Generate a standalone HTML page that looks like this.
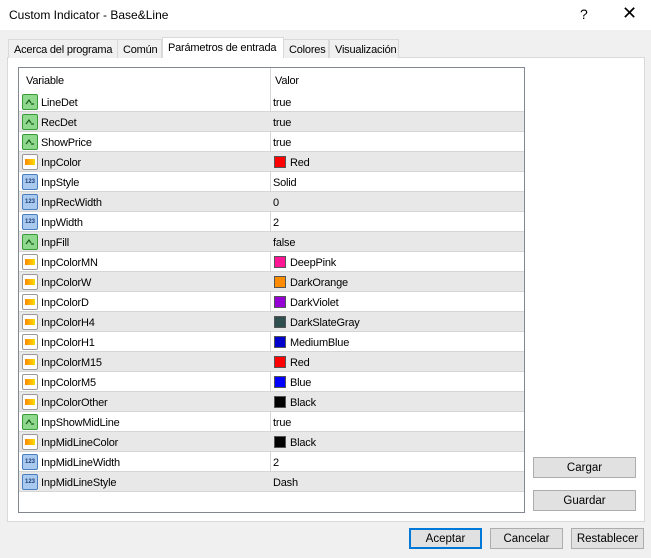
<!DOCTYPE html>
<html><head><style>
*{margin:0;padding:0;box-sizing:border-box}
body{width:651px;height:558px;background:#f0f0f0;font-family:"Liberation Sans",sans-serif;font-size:11px;color:#000;position:relative;overflow:hidden}
.a{position:absolute}
.title{left:0;top:0;width:651px;height:30px;background:#fff}
.tab{top:39px;height:19px;border:1px solid #d9d9d9;border-bottom:none;background:#f0f0f0;padding:4px 0 0 5px;font-size:11px;letter-spacing:-0.2px;white-space:nowrap;overflow:hidden}
.panel{left:7px;top:57px;width:638px;height:465px;background:#fff;border:1px solid #d9d9d9}
.grid{left:18px;top:67px;width:507px;height:446px;border:1px solid #828790;background:#fff}
.row{position:absolute;left:0;width:505px;height:20px;border-bottom:1px solid #d6d6d6}
.row.g{background:#e8e8e8}
.row span{position:absolute;top:5px;letter-spacing:-0.2px;white-space:nowrap}
.vl{position:absolute;left:251px;top:0;width:1px;height:424px;background:#d6d6d6}
.ic{position:absolute;left:3px;top:2px;width:16px;height:16px;border-radius:2px}
.grn{background:#8fd98f;border:1px solid #3a9a3a}
.blu{background:#a9c9ee;border:1px solid #4a7fbf;font-size:6px;font-weight:bold;color:#1c3f78;text-align:center;line-height:14px}
.org{background:#fff;border:1px solid #999}
.sw{position:absolute;left:255px;top:4px;width:12px;height:12px;border:1px solid #555}
.btn{height:21px;border:1px solid #adadad;background:#e1e1e1;text-align:center;line-height:20px;font-size:11.5px}
</style></head><body>
<div class="a title"></div>
<div class="a" style="left:9px;top:8px;font-size:12px">Custom Indicator - Base&amp;Line</div>
<div class="a" style="left:580px;top:6px;font-size:14px">?</div>
<div class="a" style="left:622px;top:3px;font-size:18px;font-weight:300">✕</div>
<div class="a panel"></div>
<div class="a tab" style="left:8px;width:110px">Acerca del programa</div>
<div class="a tab" style="left:117px;width:45px">Común</div>
<div class="a tab" style="left:162px;top:37px;height:21px;width:122px;background:#fff;padding-top:4px">Parámetros de entrada</div>
<div class="a tab" style="left:283px;width:46px">Colores</div>
<div class="a tab" style="left:329px;width:70px">Visualización</div>
<div class="a grid">
<div class="row" style="top:0;height:25px;border:none"><span style="left:7px;top:7px">Variable</span><span style="left:256px;top:7px">Valor</span></div>
<div class="vl"></div>
<div id="rows"></div>
</div>
<div class="a btn" style="left:533px;top:457px;width:103px">Cargar</div>
<div class="a btn" style="left:533px;top:490px;width:103px">Guardar</div>
<div class="a btn" style="left:409px;top:528px;width:73px;border:2px solid #0078d7;line-height:18px">Aceptar</div>
<div class="a btn" style="left:490px;top:528px;width:73px">Cancelar</div>
<div class="a btn" style="left:571px;top:528px;width:73px">Restablecer</div>
<script>
var d=[["g","LineDet","true"],["g","RecDet","true"],["g","ShowPrice","true"],["o","InpColor","Red","#f00"],["b","InpStyle","Solid"],["b","InpRecWidth","0"],["b","InpWidth","2"],["g","InpFill","false"],["o","InpColorMN","DeepPink","#ff1493"],["o","InpColorW","DarkOrange","#ff8c00"],["o","InpColorD","DarkViolet","#9400d3"],["o","InpColorH4","DarkSlateGray","#2f4f4f"],["o","InpColorH1","MediumBlue","#0000cd"],["o","InpColorM15","Red","#f00"],["o","InpColorM5","Blue","#00f"],["o","InpColorOther","Black","#000"],["g","InpShowMidLine","true"],["o","InpMidLineColor","Black","#000"],["b","InpMidLineWidth","2"],["b","InpMidLineStyle","Dash"]];
var h="";d.forEach(function(r,i){
var ic=r[0]=="g"?'<div class="ic grn"><svg width="14" height="14" viewBox="0 0 14 14"><path d="M3 9 L6 5 L8 8 M8 9 H11" stroke="#1a5a1a" fill="none" stroke-width="1.2"/></svg></div>':r[0]=="b"?'<div class="ic blu">123</div>':'<div class="ic org"><div style="margin:4px 2px;height:6px;background:linear-gradient(90deg,#f80,#fd0)"></div></div>';
var sw=r[3]?'<div class="sw" style="background:'+r[3]+'"></div>':'';
h+='<div class="row'+(i%2?' g':'')+'" style="top:'+(24+i*20)+'px">'+ic+'<span style="left:22px">'+r[1]+'</span>'+sw+'<span style="left:'+(r[3]?271:254)+'px">'+r[2]+'</span></div>';
});document.getElementById("rows").innerHTML=h;
</script>
</body></html>
